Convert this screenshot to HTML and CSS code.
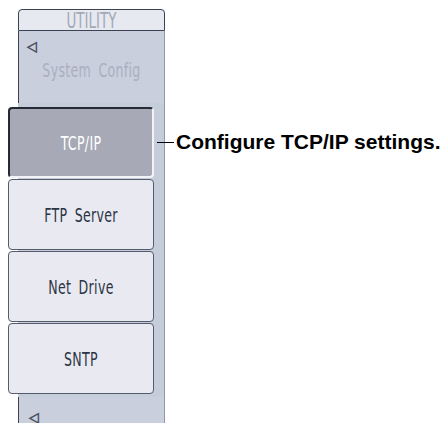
FILE: index.html
```html
<!DOCTYPE html>
<html lang="en">
<head>
  <meta charset="UTF-8">
  <title>Utility - Network</title>
  <link rel="stylesheet" href="styles.css">
</head>
<body>
  <div class="page">
    <div class="menu">
      <div class="menu-title"><span class="label">UTILITY</span></div>
      <div class="menu-back">
        <span class="arrow">◁</span>
        <span class="back-label"><span class="label">System Config</span></span>
      </div>

      <div class="keys">
        <div class="key selected"><span class="label">TCP/IP</span></div>
        <div class="key"><span class="label">FTP Server</span></div>
        <div class="key"><span class="label">Net Drive</span></div>
        <div class="key"><span class="label">SNTP</span></div>
      </div>

      <div class="menu-more"><span class="arrow">◁</span></div>
    </div>

    <div class="callout">
      <span class="leader"></span>
      <span class="note">Configure TCP/IP settings.</span>
    </div>
  </div>
</body>
</html>
```

FILE: styles.css
```css
body {
  margin: 0;
  background: #fff;
  font-family: "DejaVu Sans Condensed", "DejaVu Sans", sans-serif;
  font-stretch: condensed;
}
.page {
  display: flex;
  align-items: flex-start;
  height: 423px;
  overflow: hidden;
}
.label {
  display: inline-block;
  font-size: 14px;
  letter-spacing: 0.3px;
  word-spacing: 3px;
  transform: scaleY(1.36);
}
.menu {
  margin: 9px 0 0 18px;
  width: 147px;
  display: flex;
  flex-direction: column;
}
.menu-title {
  height: 20px;
  line-height: 21px;
  text-align: center;
  color: #a3a8b7;
  background: #e7e9f1;
  border: 1px solid #3c4254;
  border-radius: 4px 4px 0 0;
}
.menu-title .label {
  font-size: 15px;
  letter-spacing: 0;
}
.menu-back {
  height: 72px;
  background: #c9cfdc;
  border-left: 1px solid #3c4254;
  border-right: 1px solid #8f97a8;
}
.arrow {
  display: block;
  font-size: 14px;
  color: #fff;
  -webkit-text-stroke: 0.7px #4a5062;
  padding: 8px 0 0 8px;
  line-height: 14px;
}
.back-label {
  display: block;
  text-align: center;
  margin-top: 7px;
  color: #a9b0c1;
}
.keys {
  margin-left: -10px;
  background: linear-gradient(to right, #fff 10px, #c6cdda 10px);
  padding: 4px 0 3px;
  border-right: 1px solid #8f97a8;
  display: flex;
  flex-direction: column;
  gap: 1px;
}
.key {
  width: 146px;
  height: 71px;
  box-sizing: border-box;
  display: flex;
  align-items: center;
  justify-content: center;
  color: #2c3444;
  background: #e8e9f1;
  border: 1px solid #555b6b;
  border-radius: 4px;
}
.key.selected {
  color: #fff;
  background: #a7aab6;
  border: 2px solid #262a36;
  border-right-color: #f2f3f7;
  border-bottom-color: #f2f3f7;
}
.menu-more {
  height: 30px;
  background: #c9cfdc;
  border-left: 1px solid #3c4254;
  border-right: 1px solid #8f97a8;
}
.menu-more .arrow {
  padding: 13px 0 0 10px;
}
.callout {
  margin-top: 130px;
  display: flex;
  align-items: center;
  gap: 2px;
}
.leader {
  width: 17px;
  height: 1px;
  background: #000;
  margin-left: -8px;
}
.note {
  font-family: "Liberation Sans", Arial, sans-serif;
  font-stretch: normal;
  font-weight: bold;
  font-size: 21px;
  color: #000;
}
```
